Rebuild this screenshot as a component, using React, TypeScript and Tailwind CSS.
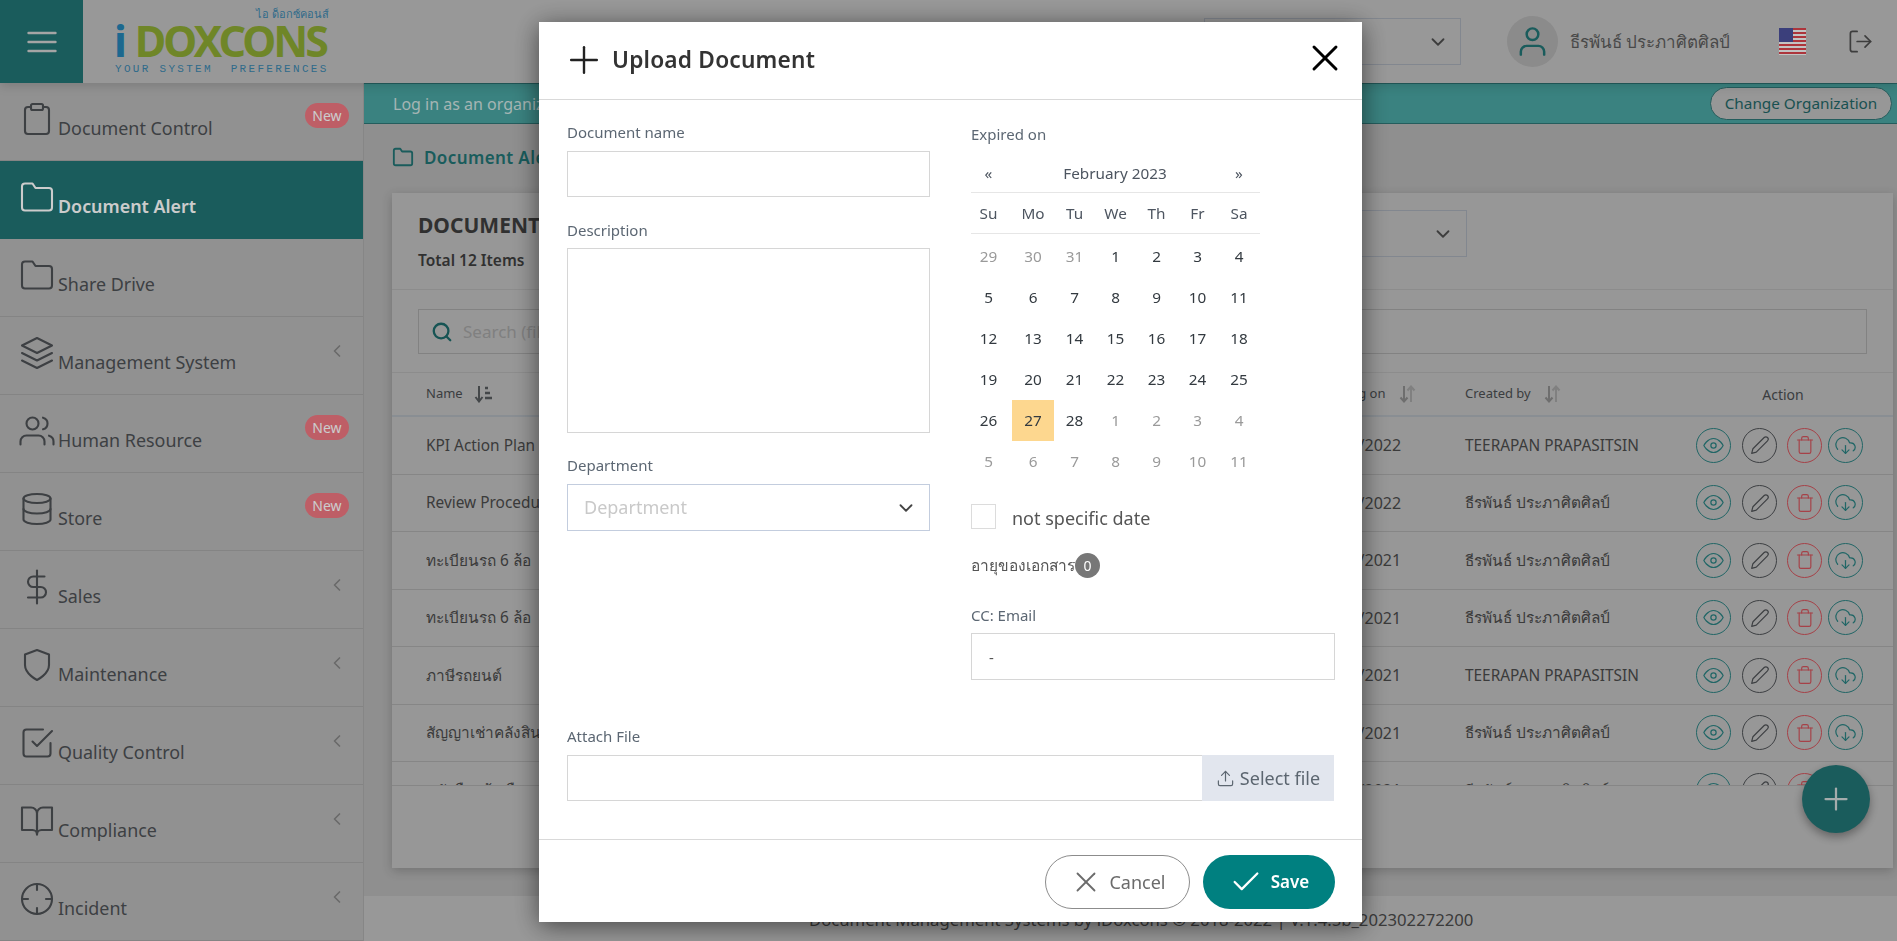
import { FiBookOpen, FiCheck, FiCheckSquare, FiChevronDown, FiChevronLeft, FiClipboard, FiCrosshair, FiDatabase, FiDollarSign, FiDownloadCloud, FiEdit2, FiEye, FiFolder, FiLayers, FiLogOut, FiMenu, FiPlus, FiSearch, FiShield, FiTrash, FiUpload, FiUser, FiUsers, FiX } from 'react-icons/fi'

const menu = [
    { label: 'Document Control', icon: FiClipboard, badge: true },
    { label: 'Document Alert', icon: FiFolder, active: true },
    { label: 'Share Drive', icon: FiFolder },
    { label: 'Management System', icon: FiLayers, arrow: true },
    { label: 'Human Resource', icon: FiUsers, badge: true },
    { label: 'Store', icon: FiDatabase, badge: true },
    { label: 'Sales', icon: FiDollarSign, arrow: true },
    { label: 'Maintenance', icon: FiShield, arrow: true },
    { label: 'Quality Control', icon: FiCheckSquare, arrow: true },
    { label: 'Compliance', icon: FiBookOpen, arrow: true },
    { label: 'Incident', icon: FiCrosshair, arrow: true },
]

const rows = [
    { name: 'KPI Action Plan 2022', date: '01/07/2022', by: 'TEERAPAN PRAPASITSIN' },
    { name: 'Review Procedure 2022', date: '15/03/2022', by: 'ธีรพันธ์ ประภาศิตศิลป์' },
    { name: 'ทะเบียนรถ 6 ล้อ', date: '21/12/2021', by: 'ธีรพันธ์ ประภาศิตศิลป์' },
    { name: 'ทะเบียนรถ 6 ล้อ', date: '21/12/2021', by: 'ธีรพันธ์ ประภาศิตศิลป์' },
    { name: 'ภาษีรถยนต์', date: '08/11/2021', by: 'TEERAPAN PRAPASITSIN' },
    { name: 'สัญญาเช่าคลังสินค้า', date: '02/10/2021', by: 'ธีรพันธ์ ประภาศิตศิลป์' },
    { name: 'หนังสือแจ้งเตือน', date: '02/10/2021', by: 'ธีรพันธ์ ประภาศิตศิลป์' },
]

const weeks = [
    [29, 30, 31, 1, 2, 3, 4],
    [5, 6, 7, 8, 9, 10, 11],
    [12, 13, 14, 15, 16, 17, 18],
    [19, 20, 21, 22, 23, 24, 25],
    [26, 27, 28, 1, 2, 3, 4],
    [5, 6, 7, 8, 9, 10, 11],
]

function SortBoth() {
    return (
        <svg width="17" height="18" viewBox="0 0 17 18" fill="none" strokeWidth="2">
            <path d="M5 1v15M1.500 12.500 5 16.500l3.500-4" stroke="#8a8a8a" />
            <path d="M12 17V2M8.500 5.500 12 1.500l3.500 4" stroke="#a0a0a0" />
        </svg>
    )
}

function SortName() {
    return (
        <svg width="18" height="18" viewBox="0 0 18 18" fill="none">
            <path d="M5 1v15M1.500 12 5 16.500 8.500 12" stroke="#55595c" strokeWidth="2" />
            <path d="M11 3h3M11 8h5M11 13h7" stroke="#55595c" strokeWidth="2.500" />
        </svg>
    )
}

function UsFlag() {
    return (
        <svg width="27" height="27" viewBox="0 0 27 27">
            <rect width="27" height="27" fill="#f4f4f4" />
            <path d="M0 1h27M0 5h27M0 9h27M0 13h27M0 17h27M0 21h27M0 25h27" stroke="#d9434c" strokeWidth="2" />
            <rect width="14" height="14" fill="#4a4f9a" />
        </svg>
    )
}

function ActionCircle({ color, className, children }: { color: string, className: string, children: any }) {
    return (
        <div className={`w-[35px] h-[35px] rounded-full border flex items-center justify-center shrink-0 ${color} ${className}`}>
            {children}
        </div>
    )
}

function Sidebar() {
    return (
        <aside className="w-[364px] shrink-0 bg-[#b6b6b6] border-r border-[#a8a8a8]">
            {menu.map((item) => {
                const Icon = item.icon
                return (
                    <div
                        key={item.label}
                        className={`relative h-[78px] flex items-start pl-[19px] pt-[18px] border-b ${item.active ? 'bg-[#217373] text-white border-[#217373] font-semibold' : 'border-[#a6a6a6] text-[#4d5054]'}`}
                    >
                        <Icon size={36} strokeWidth={1.4} className="shrink-0" />
                        <span className="ml-[3px] mt-[14px] text-[17.900px] leading-[27px]">{item.label}</span>
                        {item.badge && (
                            <span className="absolute right-[14px] top-[20px] w-[44px] h-[25px] rounded-full bg-[#ee7680] text-white text-[14px] flex items-center justify-center">
                                New
                            </span>
                        )}
                        {item.arrow && <FiChevronLeft size={20} className="absolute left-[327px] top-[24px] text-[#858585]" />}
                    </div>
                )
            })}
        </aside>
    )
}

function DocumentTable() {
    return (
        <div className="mx-0 h-[675px] bg-[#bdbdbd] shadow-[0_3px_10px_rgba(0,0,0,0.2)]">
            <div className="h-[97px] border-b border-[#b0b0b0] flex justify-between pl-[26px] pr-[426px]">
                <div>
                    <h1 className="mt-[18px] text-[21px] leading-[28px] font-bold text-[#3d3d3d]">DOCUMENT ALERT</h1>
                    <p className="mt-[9px] text-[15.500px] leading-[24px] font-semibold text-[#3d3d3d]">Total 12 Items</p>
                </div>
                <div className="mt-[17px] w-[300px] h-[47px] border border-[#a3a9b3] flex items-center justify-end pr-[12px] text-[#4d4d4d]">
                    <FiChevronDown size={22} />
                </div>
            </div>
            <div className="px-[26px] pt-[19px] h-[83px] border-b border-[#b0b0b0]">
                <div className="h-[45px] border border-[#a3a3a3] flex items-center pl-[12px] gap-[10px]">
                    <FiSearch size={22} strokeWidth={2.500} className="text-[#1d6a6a]" />
                    <span className="text-[17px] text-[#a0a0a0]">Search (file name)</span>
                </div>
            </div>
            <div className="h-[413px] overflow-hidden border-b border-[#a8a8a8]">
                <div className="h-[44px] border-b-2 border-[#acb2b8] flex items-center pl-[34px] text-[13px] text-[#4a4d50]">
                    <div className="w-[890px] flex items-center gap-[11px]">Name <SortName /></div>
                    <div className="w-[149px] flex items-center gap-[13px]">Expiring on <SortBoth /></div>
                    <div className="w-[215px] flex items-center gap-[13px]">Created by <SortBoth /></div>
                    <div className="w-[206px] text-center text-[14px]">Action</div>
                </div>
                {rows.map((row, i) => (
                    <div key={i} className="h-[57.500px] border-b border-[#a8a8a8] flex items-center pl-[34px] text-[15.400px] text-[#4a4a4a]">
                        <div className="w-[890px] truncate">{row.name}</div>
                        <div className="w-[149px] text-[16px]">{row.date}</div>
                        <div className="w-[215px]">{row.by}</div>
                        <div className="flex items-center pl-[16px]">
                            <ActionCircle color="border-[#2a8080] text-[#2a8080]" className="">
                                <FiEye size={21} strokeWidth={1.400} />
                            </ActionCircle>
                            <ActionCircle color="border-[#4d5054] text-[#4d5054]" className="ml-[11px]">
                                <FiEdit2 size={20} strokeWidth={1.400} />
                            </ActionCircle>
                            <ActionCircle color="border-[#d0525a] text-[#d0525a]" className="ml-[10px]">
                                <FiTrash size={20} strokeWidth={1.400} />
                            </ActionCircle>
                            <ActionCircle color="border-[#2a8080] text-[#2a8080]" className="ml-[6px]">
                                <FiDownloadCloud size={21} strokeWidth={1.400} />
                            </ActionCircle>
                        </div>
                    </div>
                ))}
            </div>
        </div>
    )
}

function Calendar() {
    const cols = 'grid grid-cols-[41px_42px_41px_41px_41px_41px_42px]'
    return (
        <div className="w-[289px] mt-[9px] text-[15.300px] text-center">
            <div className={`${cols} h-[39px] border-b border-[#e6e6e6] items-center text-[#4d5560]`}>
                <span className="pr-[6px]">«</span>
                <span className="col-span-5">February 2023</span>
                <span>»</span>
            </div>
            <div className={`${cols} h-[41px] border-b border-[#e6e6e6] items-center text-[#4d5560] mb-[2px]`}>
                {['Su', 'Mo', 'Tu', 'We', 'Th', 'Fr', 'Sa'].map((d, i) => (
                    <span key={d} className={i === 0 ? 'pr-[6px]' : ''}>{d}</span>
                ))}
            </div>
            {weeks.map((week, w) => (
                <div key={w} className={`${cols} h-[41px]`}>
                    {week.map((d, i) => {
                        const muted = (w === 0 && d > 20) || (w === 4 && d < 10) || w === 5
                        const today = w === 4 && d === 27
                        return (
                            <span
                                key={i}
                                className={`flex items-center justify-center ${i === 0 ? 'pr-[6px]' : ''} ${today ? 'bg-[#fdd78f]' : ''} ${muted ? 'text-[#9a9a9a]' : 'text-[#333a40]'}`}
                            >
                                {d}
                            </span>
                        )
                    })}
                </div>
            ))}
        </div>
    )
}

function UploadModal() {
    const label = 'block text-[15px] leading-[22px] text-[#5c6773]'
    const field = 'block w-full border border-[#d6d6d6] outline-none'
    return (
        <>
            <div className="fixed inset-0 z-20 bg-black/20" />
            <div className="fixed z-30 left-[539px] top-[22px] w-[823px] h-[900px] bg-white shadow-[0_4px_24px_rgba(0,0,0,0.55)] flex flex-col">
                <div className="h-[78px] border-b border-[#d9d9d9] flex items-center justify-between pl-[31px] pr-[26px] shrink-0">
                    <div className="flex items-center gap-[10px] -mt-[1px]">
                        <FiPlus size={44} strokeWidth={1.300} className="-mx-[8px] text-[#222]" />
                        <span className="ml-[4px] text-[22.700px] font-semibold text-[#333] tracking-[0.2px]">Upload Document</span>
                    </div>
                    <FiX size={44} strokeWidth={1.600} className="-mr-[11px] -mt-[6px] text-black" />
                </div>
                <div className="px-[28px] flex-1">
                    <div className="grid grid-cols-[363px_364px] gap-x-[41px]">
                        <div>
                            <label className={`${label} mt-[21px]`}>Document name</label>
                            <input className={`${field} mt-[8px] h-[46px]`} />
                            <label className={`${label} mt-[22px]`}>Description</label>
                            <textarea className={`${field} mt-[7px] h-[185px] resize-none`} />
                            <label className={`${label} mt-[21px]`}>Department</label>
                            <div className="mt-[8px] h-[47px] border border-[#c3cdde] flex items-center justify-between pl-[16px] pr-[12px]">
                                <span className="text-[18px] text-[#c9c9c9]">Department</span>
                                <FiChevronDown size={22} className="text-[#444]" />
                            </div>
                        </div>
                        <div>
                            <label className={`${label} mt-[23px]`}>Expired on</label>
                            <Calendar />
                            <div className="mt-[19px] flex items-center">
                                <div className="w-[25px] h-[25px] border border-[#dcdcdc]" />
                                <span className="ml-[16px] mt-[4px] text-[18px] text-[#555]">not specific date</span>
                            </div>
                            <div className="mt-[21px] flex items-center h-[25px]">
                                <span className="w-[104px] text-[15.500px] whitespace-nowrap text-[#555]">อายุของเอกสาร</span>
                                <span className="w-[25px] h-[25px] rounded-full bg-[#777] text-white text-[14px] flex items-center justify-center">0</span>
                            </div>
                            <label className={`${label} mt-[26px]`}>CC: Email</label>
                            <input className={`${field} mt-[7px] h-[47px] pl-[17px] text-[15px] text-[#555]`} defaultValue="-" />
                        </div>
                    </div>
                    <label className={`${label} mt-[45px]`}>Attach File</label>
                    <div className="mt-[8px] h-[46px] flex">
                        <div className="flex-1 border border-[#d6d6d6] border-r-0" />
                        <div className="w-[132px] bg-[#e2e6ee] flex items-center justify-center gap-[5px] text-[18px] text-[#5c6670]">
                            <FiUpload size={19} strokeWidth={1.500} />
                            Select file
                        </div>
                    </div>
                </div>
                <div className="h-[83px] border-t border-[#d9d9d9] flex justify-end items-start gap-[13px] pt-[15px] pr-[27px] shrink-0">
                    <button className="w-[145px] h-[54px] rounded-[27px] border border-[#8c8c8c] flex items-center justify-center gap-[6px] text-[18px] text-[#6b6b6b]">
                        <FiX size={34} strokeWidth={1.300} />
                        Cancel
                    </button>
                    <button className="w-[132px] h-[54px] rounded-[27px] bg-[#008080] flex items-center justify-center gap-[8px] text-[17px] font-semibold text-white">
                        <FiCheck size={34} strokeWidth={1.600} />
                        Save
                    </button>
                </div>
            </div>
        </>
    )
}

export default function App() {
    return (
        <div className="h-screen overflow-hidden flex flex-col font-['Noto_Sans','Noto_Sans_CJK_SC',sans-serif] bg-[#b3b3b3]">
            <header className="relative z-10 h-[83px] shrink-0 bg-[#bfbfbf] flex items-center shadow-[0_3px_10px_rgba(0,0,0,0.15)]">
                <div className="w-[83px] h-[83px] bg-[#217373] flex items-center justify-center text-[#cfcfcf]">
                    <FiMenu size={36} strokeWidth={1.600} />
                </div>
                <div className="relative ml-[32px] w-[215px] h-[83px]">
                    <span className="absolute right-[1px] top-[6px] text-[11px] leading-[16px] text-[#3b86ad]">ไอ ด็อกซ์คอนส์</span>
                    <div className="absolute left-[-1px] top-[15px] text-[43px] leading-[52px] font-bold tracking-[-3px] whitespace-nowrap">
                        <span className="text-[#2382b3]">i</span>
                        <span className="ml-[11px] text-[#8ba833]">DOXCONS</span>
                    </div>
                    <span className="absolute left-0 top-[61px] font-['Liberation_Mono',monospace] text-[11px] leading-[16px] tracking-[2.300px] whitespace-pre text-[#3b86ad]">YOUR SYSTEM  PREFERENCES</span>
                </div>
                <div className="ml-auto mr-[46px] w-[257px] h-[47px] border border-[#a3a9b3] flex items-center justify-end pr-[11px] text-[#4d4d4d]">
                    <FiChevronDown size={22} />
                </div>
                <div className="w-[51px] h-[51px] rounded-full bg-[#aeaeae] flex items-center justify-center text-[#217373] mr-[12px]">
                    <FiUser size={35} strokeWidth={1.700} />
                </div>
                <span className="text-[17px] text-[#5b5b5b] w-[209px] whitespace-nowrap">ธีรพันธ์ ประภาศิตศิลป์</span>
                <UsFlag />
                <FiLogOut size={27} strokeWidth={1.500} className="ml-[41px] mr-[23px] text-[#4d4d4d]" />
            </header>
            <div className="flex flex-1 min-h-0">
                <Sidebar />
                <main className="flex-1 min-w-0 flex flex-col">
                    <div className="h-[41px] shrink-0 bg-[#49a3a0] border-y border-[#2e7575] flex items-center justify-between pl-[29px] pr-[5px]">
                        <span className="text-[16px] text-[#cfe2e0]">Log in as an organization</span>
                        <span className="h-[33px] w-[182px] rounded-full border border-[#2e7575] bg-[#bdbdbd] flex items-center justify-center text-[15.300px] text-[#1f6666]">Change Organization</span>
                    </div>
                    <div className="h-[69px] shrink-0 pl-[28px] flex items-start pt-[22px] gap-[10px] font-semibold text-[#217373]">
                        <FiFolder size={22} strokeWidth={2} className="mt-[0px] shrink-0" />
                        <span className="text-[17px] leading-[24px] tracking-[0.400px]">Document Alert</span>
                    </div>
                    <div className="ml-[28px] mr-[4px] shrink-0">
                        <DocumentTable />
                    </div>
                    <div className="mt-[28px] flex-1 bg-[#bfbfbf] pl-[445px] pt-[11px] text-[16.700px] text-[#4a4a4a] whitespace-nowrap">
                        Document Management Systems by iDoxcons © 2018-2022 | V.1.4.5b_202302272200
                    </div>
                </main>
            </div>
            <div className="fixed z-10 left-[1802px] top-[765px] w-[68px] h-[68px] rounded-full bg-[#217373] text-[#cfd8d8] flex items-center justify-center shadow-[0_4px_10px_rgba(0,0,0,0.35)]">
                <FiPlus size={36} strokeWidth={1.500} />
            </div>
            <UploadModal />
        </div>
    )
}
